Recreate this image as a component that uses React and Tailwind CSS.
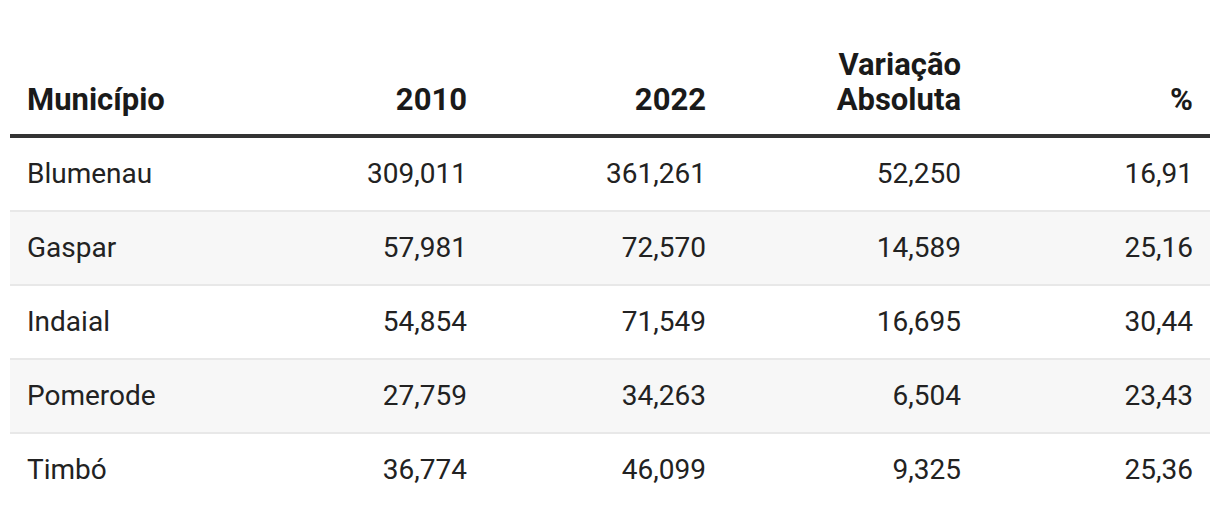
import React from "react";

const rows = [
  ["Blumenau", "309,011", "361,261", "52,250", "16,91"],
  ["Gaspar", "57,981", "72,570", "14,589", "25,16"],
  ["Indaial", "54,854", "71,549", "16,695", "30,44"],
  ["Pomerode", "27,759", "34,263", "6,504", "23,43"],
  ["Timbó", "36,774", "46,099", "9,325", "25,36"],
];

export default function App() {
  return (
    <div
      className="w-[1220px] h-[516px] bg-white pt-[29px] px-[10px] overflow-hidden"
      style={{ fontFamily: "Roboto, 'Liberation Sans', sans-serif" }}
    >
      <table className="w-[1200px] table-fixed border-collapse text-[28px] leading-[35px]">
        <colgroup>
          <col className="w-[235px]" />
          <col className="w-[239px]" />
          <col className="w-[239px]" />
          <col className="w-[255px]" />
          <col className="w-[232px]" />
        </colgroup>
        <thead>
          <tr className="border-b-4 border-[#333333] text-[#1a1a1a] text-[31px]">
            <th className="px-[17px] pt-[18px] pb-[17px] text-left align-bottom font-bold">Município</th>
            <th className="px-[17px] pt-[18px] pb-[17px] text-right align-bottom font-bold">2010</th>
            <th className="px-[17px] pt-[18px] pb-[17px] text-right align-bottom font-bold">2022</th>
            <th className="px-[17px] pt-[18px] pb-[17px] text-right align-bottom font-bold">
              Variação
              <br />
              Absoluta
            </th>
            <th className="px-[17px] pt-[18px] pb-[17px] text-right align-bottom font-bold">%</th>
          </tr>
        </thead>
        <tbody className="text-[#222222]">
          {rows.map((r, i) => (
            <tr
              key={r[0]}
              className={
                (i % 2 === 1 ? "bg-[#f7f7f7] " : "bg-white ") +
                (i < rows.length - 1 ? "border-b-2 border-[#e8e8e8]" : "")
              }
            >
              <td className="px-[17px] pt-[18px] pb-[19px] text-left">{r[0]}</td>
              <td className="px-[17px] pt-[18px] pb-[19px] text-right">{r[1]}</td>
              <td className="px-[17px] pt-[18px] pb-[19px] text-right">{r[2]}</td>
              <td className="px-[17px] pt-[18px] pb-[19px] text-right">{r[3]}</td>
              <td className="px-[17px] pt-[18px] pb-[19px] text-right">{r[4]}</td>
            </tr>
          ))}
        </tbody>
      </table>
    </div>
  );
}
